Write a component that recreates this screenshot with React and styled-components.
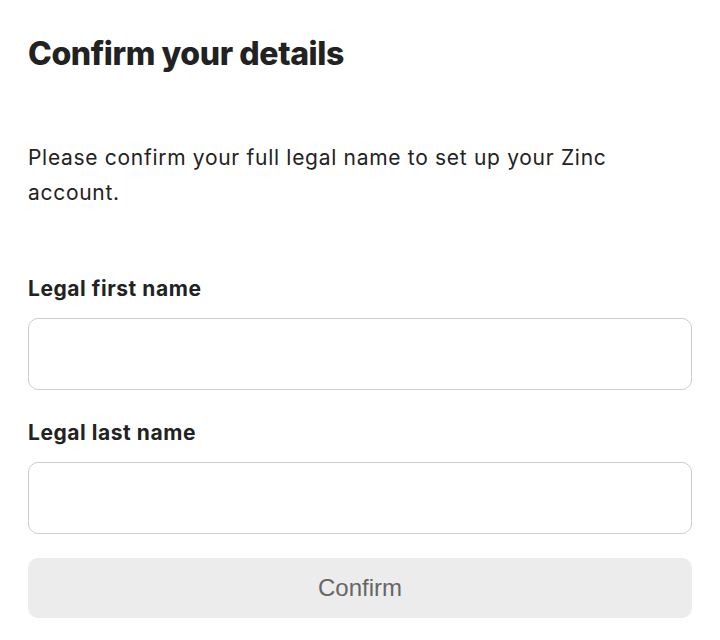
import React from "react";
import styled, { createGlobalStyle } from "styled-components";

const Global = createGlobalStyle`
  html, body { margin: 0; padding: 0; background: #ffffff; }
  body { font-family: Inter, "Noto Sans", sans-serif; color: #222222; }
  * { box-sizing: border-box; }
`;

const Page = styled.main`
  padding: 34px 28px 0 28px;
  display: flex;
  flex-direction: column;
`;

const Title = styled.h1`
  margin: 0;
  font-size: 32px;
  line-height: 40px;
  font-weight: 800;
  letter-spacing: -0.4px;
  color: #222222;
`;

const Intro = styled.p`
  margin: 66px 0 0 0;
  font-size: 21px;
  line-height: 35px;
  font-weight: 400;
  letter-spacing: 0.7px;
  color: #222222;
  max-width: 640px;
`;

const Form = styled.form`
  display: flex;
  flex-direction: column;
  margin-top: 66px;
`;

const Field = styled.div`
  display: flex;
  flex-direction: column;
  gap: 16px;
  margin-bottom: ${(p) => p.$gapAfter}px;
`;

const Label = styled.label`
  font-size: 21px;
  line-height: 26px;
  font-weight: 700;
  letter-spacing: 0.55px;
  color: #222222;
`;

const Input = styled.input`
  height: 72px;
  width: 100%;
  border: 1px solid #cccccc;
  border-radius: 10px;
  background: #ffffff;
  padding: 0 16px;
  font: inherit;
  font-size: 21px;
  outline: none;
`;

const Button = styled.button`
  height: 60px;
  width: 100%;
  border: none;
  border-radius: 10px;
  background: #ececec;
  color: #666666;
  font-family: "Liberation Sans", Arial, sans-serif;
  font-size: 24px;
  cursor: default;
`;

export default function App() {
  return (
    <>
      <Global />
      <Page>
        <Title>Confirm your details</Title>
        <Intro>
          Please confirm your full legal name to set up your Zinc account.
        </Intro>
        <Form onSubmit={(e) => e.preventDefault()}>
          <Field $gapAfter={30}>
            <Label htmlFor="first">Legal first name</Label>
            <Input id="first" type="text" />
          </Field>
          <Field $gapAfter={24}>
            <Label htmlFor="last">Legal last name</Label>
            <Input id="last" type="text" />
          </Field>
          <Button type="submit" disabled>Confirm</Button>
        </Form>
      </Page>
    </>
  );
}
